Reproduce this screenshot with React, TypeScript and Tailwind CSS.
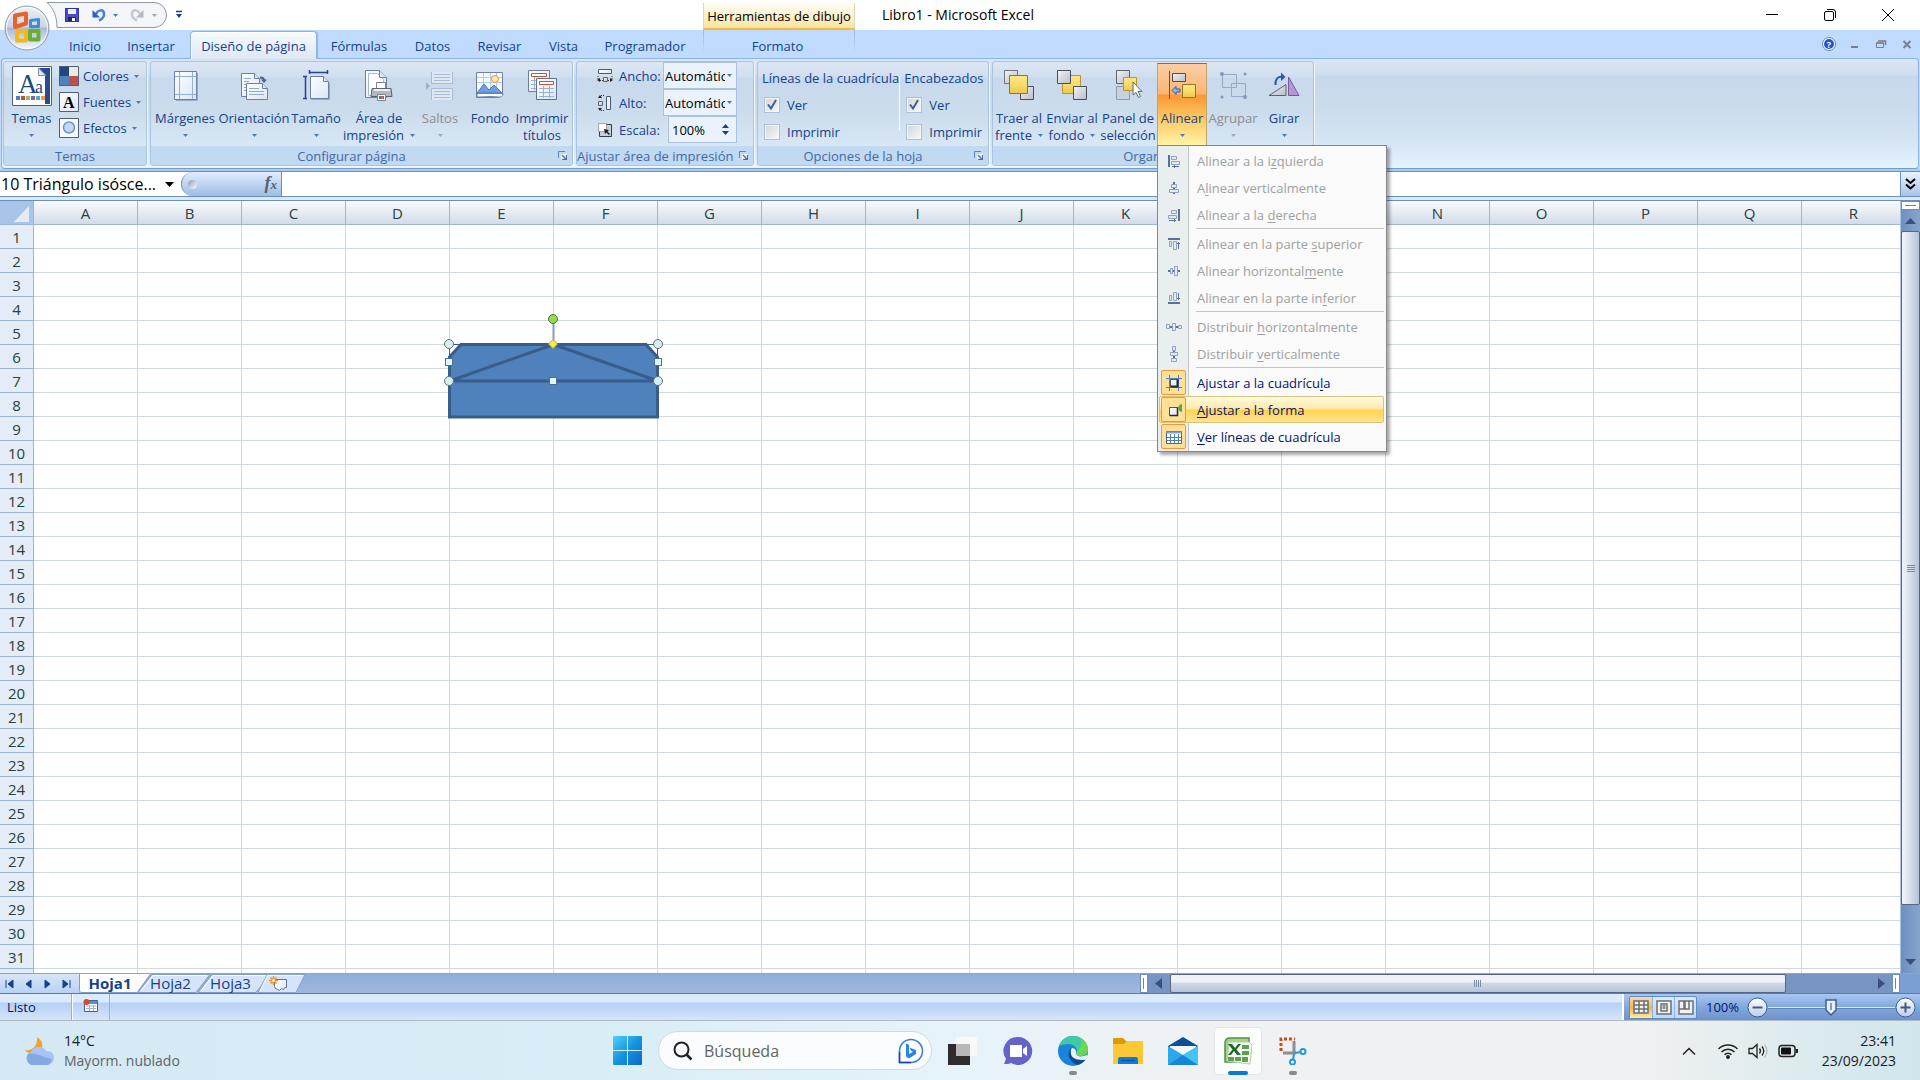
// Spreadsheet window with the page layout ribbon, plus the desktop taskbar.
// Drawings are small inline SVG components so no asset pipeline is needed.

import type { ReactNode } from "react";

const COLUMNS = "ABCDEFGHIJKLMNOPQR".split("");
const ROWS = Array.from({ length: 31 }, (_, i) => i + 1);

/* ---------- shared bits ---------- */

function Caret({ muted }: { muted?: boolean }) {
  return (
    <svg width="5" height="3" viewBox="0 0 5 3" className="inline-block shrink-0" aria-hidden="true">
      <path d="M0 0h5L2.5 3z" fill={muted ? "#a8a8a8" : "#4a7ab8"} />
    </svg>
  );
}

function Defs() {
  return (
    <svg width="0" height="0" className="absolute" aria-hidden="true">
      <defs>
        <linearGradient id="paper" x1="0" y1="0" x2="1" y2="1">
          <stop offset="0" stopColor="#fff" />
          <stop offset="1" stopColor="#dbe6f5" />
        </linearGradient>
        <linearGradient id="grey" x1="0" y1="0" x2="1" y2="1">
          <stop offset="0" stopColor="#f3f4f6" />
          <stop offset="1" stopColor="#b9bdc6" />
        </linearGradient>
        <linearGradient id="gold" x1="0" y1="0" x2="0" y2="1">
          <stop offset="0" stopColor="#fbe58a" />
          <stop offset="0.5" stopColor="#f8dc6c" />
          <stop offset="1" stopColor="#edc84c" />
        </linearGradient>
        <linearGradient id="orb" x1="0" y1="0" x2="0" y2="1">
          <stop offset="0" stopColor="#eef1f6" />
          <stop offset="0.48" stopColor="#cbd4e3" />
          <stop offset="0.5" stopColor="#a9b9d2" />
          <stop offset="1" stopColor="#f7fafe" />
        </linearGradient>
        <linearGradient id="knob" x1="0" y1="0" x2="0" y2="1">
          <stop offset="0" stopColor="#fff" />
          <stop offset="1" stopColor="#b9cdec" />
        </linearGradient>
        <linearGradient id="win" x1="0" y1="0" x2="1" y2="1">
          <stop offset="0" stopColor="#4fd2fb" />
          <stop offset="0.5" stopColor="#1595e0" />
          <stop offset="1" stopColor="#0669c8" />
        </linearGradient>
      </defs>
    </svg>
  );
}

/* ---------- ribbon icons (32px) ---------- */

function Svg32({ children }: { children: ReactNode }) {
  return (
    <svg width="32" height="32" viewBox="0 0 32 32" className="shrink-0" aria-hidden="true">
      {children}
    </svg>
  );
}

const MarginsIcon = (
  <Svg32>
    <path d="M5.500 2.500h22v28h-22z" fill="url(#paper)" stroke="#6d7fa3" />
    <path d="M28.500 4v27.500H7" fill="none" stroke="#9aa9c4" />
    <path d="M10.500 3v27M23.500 3v27M6 7.500h21M6 25.500h21" stroke="#8fb0d8" />
  </Svg32>
);

const OrientationIcon = (
  <Svg32>
    <path d="M3.500 4.500h13l5 5v18h-18z" fill="url(#paper)" stroke="#6d7fa3" />
    <path d="M16.500 4.500v5h5" fill="#dce6f4" stroke="#6d7fa3" />
    <path d="M6 9.500h7M6 12.500h5M6 15.500h3M6 18.500h2M6 21.500h2" stroke="#8fa9d2" />
    <path d="M8.500 14.500h16l5 5v11h-21z" fill="url(#paper)" stroke="#6d7fa3" />
    <path d="M24.500 14.500v5h5" fill="#dce6f4" stroke="#6d7fa3" />
    <path d="M11 19.500h10M11 22.500h15M11 25.500h15" stroke="#8fa9d2" />
    <path d="M22 8.500c3 0 4 1 4 3" fill="none" stroke="#4e6186" strokeWidth="2" />
    <path d="M23 10.500h6l-3 3.500z" fill="#4e6186" />
  </Svg32>
);

const SizeIcon = (
  <Svg32>
    <path d="M10.500 7.500h13l5 5v17h-18z" fill="url(#paper)" stroke="#6d7fa3" />
    <path d="M23.500 7.500v5h5" fill="#dce6f4" stroke="#6d7fa3" />
    <path d="M11 30.500h18.500V14" fill="none" stroke="#9aa9c4" />
    <path d="M9.500 3.500h18M9.500 1v4M27.500 1v4M5.500 7.500v22M3 7.500h4M3 29.500h4" stroke="#2f3f98" strokeWidth="1.500" fill="none" />
  </Svg32>
);

const PrintAreaIcon = (
  <Svg32>
    <path d="M2.500 1.500h14l7 7v20h-21z" fill="url(#paper)" stroke="#6d7fa3" />
    <path d="M5.500 4.500h9l6 6v16h-15z" fill="#fff" stroke="#aab8cf" />
    <path d="M16.500 1.500v7h7" fill="#dce6f4" stroke="#6d7fa3" />
    <path d="M13.500 13.500h9v7h-9z" fill="#fff" stroke="#7a8496" />
    <path d="M9 19.500h19l1 8H8z" fill="#b2b6be" stroke="#5c6370" />
    <path d="M11 21h16" stroke="#eceef1" strokeWidth="2" />
    <path d="M14.500 25.500h8v6h-8z" fill="#fff" stroke="#7a8496" />
    <path d="M16 27h5v3h-5z" fill="#3c78c8" />
    <path d="M18 27h2v3h-2z" fill="#e0682c" />
  </Svg32>
);

const BreaksIcon = (
  <Svg32>
    <path d="M7.500 3v11.500h21V3M7.500 31V19.500h21V31" fill="#dfe7f3" stroke="#a9bbd6" />
    <path d="M10 5.500h16M10 8.500h16M10 11.500h16M10 22.500h16M10 25.500h16M10 28.500h16" stroke="#a9bbd6" />
    <path d="M2 13l4 4-4 4z" fill="#9fb0cd" />
  </Svg32>
);

const BackgroundIcon = (
  <Svg32>
    <path d="M2.500 3.500h26v21l-4 4h-22z" fill="#f6f9fd" stroke="#6d7fa3" />
    <path d="M3 8.500h25M3 13.500h25M9.500 4v20M16.500 4v20M22.500 4v20" stroke="#b9c9e0" />
    <circle cx="21" cy="10" r="3.500" fill="#fce6c0" stroke="#e59a3c" />
    <path d="M3 24l7-9 5 6 5-5 8 8z" fill="#6f9fdf" stroke="#4a7cc4" />
    <path d="M3 24.500h26c0 3-2 4-5 3.500-6-1-14 0-21 0z" fill="#fff" stroke="#6d7fa3" />
  </Svg32>
);

const PrintTitlesIcon = (
  <Svg32>
    <path d="M2.500 1.500h21v21h-21z" fill="url(#paper)" stroke="#6d7fa3" />
    <path d="M5.500 4.500h15v3h-15z" fill="#fff" stroke="#c8502c" />
    <path d="M5 11.500h7M5 15.500h7M5 19.500h7M8.500 8v13" stroke="#9db1d1" />
    <path d="M10.500 9.500h20v21h-20z" fill="url(#paper)" stroke="#5f7093" />
    <path d="M13.500 12.500h14v3h-14z" fill="#fff" stroke="#c8502c" />
    <path d="M13 19.500h15M13 23.500h15M13 27.500h15M17.500 17v12M23.500 17v12" stroke="#9db1d1" />
  </Svg32>
);

const BringFrontIcon = (
  <Svg32>
    <path d="M1.500 1.500h13v13h-13z" fill="url(#grey)" stroke="#6f7480" />
    <path d="M17.500 17.500h13v13h-13z" fill="url(#grey)" stroke="#4a4e58" />
    <path d="M6.500 6.500h18v18h-18z" fill="url(#gold)" stroke="#8f7626" />
  </Svg32>
);

const SendBackIcon = (
  <Svg32>
    <path d="M6.500 6.500h18v18h-18z" fill="url(#gold)" stroke="#b9972c" />
    <path d="M1.500 1.500h13v13h-13z" fill="url(#grey)" stroke="#4a4e58" />
    <path d="M17.500 17.500h13v13h-13z" fill="url(#grey)" stroke="#4a4e58" />
  </Svg32>
);

const SelectionIcon = (
  <Svg32>
    <path d="M4.500 1.500h13v13h-13z" fill="url(#grey)" stroke="#5c616c" />
    <path d="M4.500 17.500h13v13h-13z" fill="#c9d1de" stroke="#8f9bb0" />
    <path d="M11.500 8.500h13v13h-13z" fill="url(#gold)" stroke="#b9972c" />
    <path d="M21 13v13l3-2.500 2.500 5 2-1-2.500-5h4z" fill="#fff" stroke="#5d6475" />
  </Svg32>
);

const AlignIcon = (
  <Svg32>
    <path d="M3.500 2v28" stroke="#2d5ba6" />
    <path d="M6.500 4.500h13v8h-13z" fill="url(#grey)" stroke="#4a4e58" />
    <path d="M16.500 15.500h13v13h-13z" fill="url(#gold)" stroke="#8f7626" />
    <path d="M6 21.500l4-4v2.500h4v3h-4v2.500z" fill="#8fb6ee" stroke="#2d5ba6" />
  </Svg32>
);

const GroupIcon = (
  <Svg32>
    <path d="M5.500 5.500h14v13h-14zM14.500 14.500h14v13h-14z" fill="none" stroke="#98a7c6" />
    <g fill="#8696ba">
      <circle cx="5" cy="5" r="2" />
      <circle cx="28" cy="5" r="1.500" />
      <circle cx="5" cy="28" r="1.500" />
      <circle cx="28" cy="28" r="2" />
    </g>
  </Svg32>
);

const RotateIcon = (
  <Svg32>
    <path d="M1 26.500h17v-11z" fill="url(#grey)" stroke="#5c616c" />
    <path d="M20.500 8v18.500H31z" fill="#b497d3" stroke="#7a57a5" />
    <path d="M7.500 16C7 10 10 7 15 8" fill="none" stroke="#2d5ba6" strokeWidth="2" />
    <path d="M13 3.500l4.500 4.500-4.500 4z" fill="#2d5ba6" />
  </Svg32>
);

const ThemesIcon = (
  <svg width="40" height="40" viewBox="0 0 40 40" className="shrink-0" aria-hidden="true">
    <path d="M.5.500h39v39H.500z" fill="#fff" stroke="#50607c" />
    <path d="M27 2h11v36h-5V10z" fill="#2b4a8c" />
    <path d="M26.500 2v7.500H34z" fill="#dfe7f4" stroke="#7a8cb0" />
    <text x="6" y="27" fontSize="27" fontFamily="Liberation Serif, serif" fill="#1f497d">A</text>
    <text x="23" y="27" fontSize="18" fontFamily="Liberation Serif, serif" fill="#1f497d">a</text>
    {["#4f81bd", "#c0504d", "#9bbb59", "#8064a2", "#4bacc6", "#f79646"].map((c, i) => (
      <rect key={c} x={4 + i * 5} y="30" width="4" height="4" fill={c} />
    ))}
  </svg>
);

/* ---------- small icons ---------- */

const ColorsIcon = (
  <svg width="20" height="20" viewBox="0 0 20 20" aria-hidden="true">
    <path d="M0 0h10v10H0z" fill="#1f497d" />
    <path d="M10 0h10v10H10z" fill="#eeece1" />
    <path d="M0 10h10v10H0z" fill="#4f81bd" />
    <path d="M10 10h10v10H10z" fill="#c0504d" />
    <path d="M.5.500h19v19H.500z" fill="none" stroke="#50607c" />
  </svg>
);

const FontsIcon = (
  <svg width="20" height="20" viewBox="0 0 20 20" aria-hidden="true">
    <path d="M.5.500h19v19H.500z" fill="url(#paper)" stroke="#50607c" />
    <text x="4" y="16" fontSize="16" fontWeight="bold" fontFamily="Liberation Serif, serif" fill="#000">A</text>
  </svg>
);

const EffectsIcon = (
  <svg width="20" height="20" viewBox="0 0 20 20" aria-hidden="true">
    <path d="M.5.500h19v19H.500z" fill="#f6f9fd" stroke="#50607c" />
    <circle cx="10" cy="9.500" r="5.500" fill="#c3d8f5" stroke="#6d95d0" strokeWidth="1.500" />
  </svg>
);

const WidthIcon = (
  <svg width="16" height="16" viewBox="0 0 16 16" aria-hidden="true">
    <path d="M1.500 1.500h13v4h-13z" fill="url(#paper)" stroke="#4c5b7a" />
    <path d="M1 8v4M15 8v4" stroke="#333" strokeDasharray="1 1" />
    <path d="M3 10v4l-3-2zM13 10v4l3-2z" fill="#222" />
    <path d="M6.500 9.500h4v4h-4z" fill="url(#grey)" stroke="#667" />
    <path d="M3 12.500h3M11 12.500h3" stroke="#333" strokeDasharray="1 1" />
  </svg>
);

const HeightIcon = (
  <svg width="16" height="16" viewBox="0 0 16 16" aria-hidden="true">
    <path d="M9.500 1.500h4v13h-4z" fill="url(#paper)" stroke="#4c5b7a" />
    <path d="M1 3h4l-2-3zM1 13h4l-2 3z" fill="#222" />
    <path d="M4 .5h4M4 15.500h4" stroke="#333" strokeDasharray="1 1" />
    <path d="M1.500 6.500h4v4h-4z" fill="url(#grey)" stroke="#667" />
  </svg>
);

const ScaleIcon = (
  <svg width="16" height="16" viewBox="0 0 16 16" aria-hidden="true">
    <path d="M2.500 2.500h12v12h-12z" fill="#c9d0dc" stroke="#333c50" />
    <path d="M1.500 1.500h8v8h-8z" fill="#fff" stroke="#667" strokeDasharray="1 1" />
    <path d="M7 7l1 5 1.500-1.500L12 13l1-1-2.500-2.500L12 8z" fill="#222" />
  </svg>
);

const LauncherIcon = (
  <svg width="9" height="9" viewBox="0 0 9 9" aria-hidden="true">
    <path d="M.5 7V.500H7" fill="none" stroke="#5f84b6" />
    <path d="M3 3h5.500v5.500H3z" fill="#fff" />
    <path d="M4 4l4 4M8.500 4v4.500H4" fill="none" stroke="#4c6f9f" strokeWidth="1.500" />
  </svg>
);

/* ---------- ribbon ---------- */

function Group({ title, launcher, className, children }: { title: string; launcher?: boolean; className: string; children: ReactNode }) {
  return (
    <section
      className={`flex h-[105px] shrink-0 flex-col rounded-[3px] border border-[#a9c4e0] bg-[linear-gradient(#dce7f5_0,#d0deee_15px,#c8d9ed_16px,#cbdcec_50px,#d8e7f5_84px)] shadow-[1px_1px_0_#f0f7fe] ${className}`}
    >
      <div className="flex h-[84px]">{children}</div>
      <div className="flex h-[19px] items-center rounded-b-[2px] bg-[#c1d9f1] text-[#3e6aaa]">
        <h2 className="flex-1 text-center whitespace-nowrap">{title}</h2>
        {launcher ? (
          <button type="button" aria-label={`Opciones de ${title}`} className="flex h-4 w-5 shrink-0 items-center justify-center">
            {LauncherIcon}
          </button>
        ) : null}
      </div>
    </section>
  );
}

function BigButton({
  icon,
  lines,
  className,
  caret = true,
  muted,
  active,
}: {
  icon: ReactNode;
  lines: string[];
  className: string;
  caret?: boolean;
  muted?: boolean;
  active?: boolean;
}) {
  const state = active
    ? "border border-[#c2a26a] border-t-[#8e6b43] border-b-[#f5c33c] bg-[linear-gradient(#fbcfa4_0,#fbb574_30px,#fb9734_31px,#fdc45c_52px,#fff5a8_82px)]"
    : "border border-transparent";
  return (
    <button
      type="button"
      disabled={muted}
      className={`mt-px flex h-[83px] shrink-0 flex-col items-center pt-[5px] leading-[17px] whitespace-nowrap ${muted ? "text-[#8d8d8d]" : "text-[#15428b]"} ${state} ${className}`}
    >
      {icon}
      <span className="mt-[9px]">{lines[0]}</span>
      {lines[1] ? (
        <span className="flex items-center gap-[6px]">
          {lines[1]}
          {caret ? <Caret muted={muted} /> : null}
        </span>
      ) : (
        <span className="flex h-[17px] items-center">
          <Caret muted={muted} />
        </span>
      )}
    </button>
  );
}

function SmallButton({ icon, label }: { icon: ReactNode; label: string }) {
  return (
    <button type="button" className="flex h-[26px] items-center gap-1 text-[#15428b]">
      {icon}
      <span>{label}</span>
      <span className="ml-px flex">
        <Caret />
      </span>
    </button>
  );
}

function ScaleRow({ id, icon, label, children }: { id: string; icon: ReactNode; label: string; children: ReactNode }) {
  return (
    <div className="flex h-[27px] items-center">
      {icon}
      <label htmlFor={id} className="ml-[6px] flex-1 text-[#15428b]">
        {label}
      </label>
      {children}
    </div>
  );
}

function AutoSelect({ id }: { id: string }) {
  return (
    <div className="relative h-[27px] w-[74px] border border-[#abc1de] bg-[#eaf2fb]">
      <select id={id} className="h-full w-[61px] appearance-none overflow-hidden bg-transparent pl-px text-black">
        <option>Automático</option>
      </select>
      <span className="pointer-events-none absolute top-[11px] right-1 flex">
        <Caret />
      </span>
    </div>
  );
}

function Check({ id, label, checked }: { id: string; label: string; checked?: boolean }) {
  return (
    <div className="flex h-[27px] items-center gap-[7px]">
      <span className="relative flex">
        <input
          id={id}
          type="checkbox"
          defaultChecked={checked}
          className="peer h-4 w-4 appearance-none border border-[#abc1de] bg-linear-to-br from-[#d3d6da] to-[#f8f8f8] shadow-[inset_0_0_0_1px_#f4f4f4]"
        />
        <svg viewBox="0 0 16 16" className="pointer-events-none absolute inset-0 hidden h-4 w-4 peer-checked:block" aria-hidden="true">
          <path d="M4 7.500l3 4 5-8.500" fill="none" stroke="#3d5f91" strokeWidth="2" />
        </svg>
      </span>
      <label htmlFor={id} className="text-[#15428b]">
        {label}
      </label>
    </div>
  );
}

function Ribbon() {
  return (
    <div className="bg-[#bfdbff]">
      <div className="mr-px ml-px flex h-[111px] gap-[3px] rounded-[4px] border border-[#8db2e3] border-b-[#6f9fc4] bg-[linear-gradient(#dbe6f4_0,#cfdded_16px,#c7d8ed_17px,#cbdcec_50px,#d6e6f5_86px,#e3f4ff_108px)] pt-[2px] pl-px">
        <Group title="Temas" className="w-[144px]">
          <BigButton icon={<span className="-mt-[3px] flex">{ThemesIcon}</span>} lines={["Temas"]} className="ml-1 w-[47px] [&>span:nth-child(2)]:mt-1" />
          <div className="ml-1 flex flex-col pt-px">
            <SmallButton icon={ColorsIcon} label="Colores" />
            <SmallButton icon={FontsIcon} label="Fuentes" />
            <SmallButton icon={EffectsIcon} label="Efectos" />
          </div>
        </Group>

        <Group title="Configurar página" launcher className="w-[423px]">
          <BigButton icon={MarginsIcon} lines={["Márgenes"]} className="w-[68px]" />
          <BigButton icon={OrientationIcon} lines={["Orientación"]} className="w-[70px]" />
          <BigButton icon={SizeIcon} lines={["Tamaño"]} className="w-[54px]" />
          <BigButton icon={PrintAreaIcon} lines={["Área de", "impresión"]} className="w-[72px]" />
          <BigButton icon={BreaksIcon} lines={["Saltos"]} muted className="w-[50px]" />
          <BigButton icon={BackgroundIcon} lines={["Fondo", " "]} caret={false} className="w-[50px]" />
          <BigButton icon={PrintTitlesIcon} lines={["Imprimir", "títulos"]} caret={false} className="w-[54px]" />
        </Group>

        <Group title="Ajustar área de impresión" launcher className="w-[178px]">
          <div className="ml-5 flex w-[140px] flex-col">
            <ScaleRow id="ancho" icon={WidthIcon} label="Ancho:">
              <AutoSelect id="ancho" />
            </ScaleRow>
            <ScaleRow id="alto" icon={HeightIcon} label="Alto:">
              <AutoSelect id="alto" />
            </ScaleRow>
            <ScaleRow id="escala" icon={ScaleIcon} label="Escala:">
              <div className="flex h-[27px] w-[69px] items-center border border-[#abc1de] bg-[#eaf2fb]">
                <input id="escala" type="text" defaultValue="100%" className="w-[53px] bg-transparent pl-[3px] text-black" />
                <span className="flex flex-col gap-[3px]">
                  <button type="button" aria-label="Aumentar escala" className="flex">
                    <svg width="7" height="4" aria-hidden="true"><path d="M0 4h7L3.500 0z" fill="#15428b" /></svg>
                  </button>
                  <button type="button" aria-label="Reducir escala" className="flex">
                    <svg width="7" height="4" aria-hidden="true"><path d="M0 0h7L3.500 4z" fill="#15428b" /></svg>
                  </button>
                </span>
              </div>
            </ScaleRow>
          </div>
        </Group>

        <Group title="Opciones de la hoja" launcher className="w-[232px]">
          <fieldset className="ml-1 w-[137px]">
            <legend className="h-[29px] pt-2 whitespace-nowrap text-[#15428b]">Líneas de la cuadrícula</legend>
            <div className="pl-[2px]">
              <Check id="cuadricula-ver" label="Ver" checked />
              <Check id="cuadricula-imprimir" label="Imprimir" />
            </div>
          </fieldset>
          <div className="mt-[14px] h-[54px] w-px bg-white" />
          <fieldset className="pl-1">
            <legend className="h-[29px] pt-2 whitespace-nowrap text-[#15428b]">Encabezados</legend>
            <div className="pl-[2px]">
              <Check id="encabezados-ver" label="Ver" checked />
              <Check id="encabezados-imprimir" label="Imprimir" />
            </div>
          </fieldset>
        </Group>

        <Group title="Organizar" className="w-[322px]">
          <BigButton icon={BringFrontIcon} lines={["Traer al", "frente"]} className="w-[52px]" />
          <BigButton icon={SendBackIcon} lines={["Enviar al", "fondo"]} className="w-[54px]" />
          <BigButton icon={SelectionIcon} lines={["Panel de", "selección"]} caret={false} className="w-[58px]" />
          <div className="relative">
            <BigButton icon={AlignIcon} lines={["Alinear"]} active className="w-[50px]" />
            <AlignMenu />
          </div>
          <BigButton icon={GroupIcon} lines={["Agrupar"]} muted className="w-[52px]" />
          <BigButton icon={RotateIcon} lines={["Girar"]} className="w-[50px]" />
        </Group>
      </div>
      <div className="h-[2px] bg-[#b0cbef]" />
    </div>
  );
}

/* ---------- align menu ---------- */

// Outlined bars plus a solid guide line, in a 16px box.
function GuideIcon({ bars, guide, arrow }: { bars: string; guide: string; arrow?: string }) {
  return (
    <svg width="16" height="16" viewBox="0 0 16 16" aria-hidden="true">
      <path d={guide} stroke="#5a6f9c" strokeWidth="2" fill="none" />
      <path d={bars} stroke="#8fa2c4" fill="#e4eaf4" />
      {arrow ? <path d={arrow} stroke="#5a6f9c" fill="none" /> : null}
    </svg>
  );
}

const SnapGridIcon = (
  <svg width="16" height="16" viewBox="0 0 16 16" aria-hidden="true">
    <path d="M3.500 0v16M12.500 0v16M0 3.500h16M0 12.500h16" stroke="#4a7fd0" />
    <path d="M4.500 4.500h7v7h-7z" fill="url(#paper)" stroke="#4b556b" />
    <path d="M11.500 4.500v7h-7" stroke="#20283a" strokeWidth="2" fill="none" />
  </svg>
);

const SnapShapeIcon = (
  <svg width="16" height="16" viewBox="0 0 16 16" aria-hidden="true">
    <path d="M3.500 5.500h8v8h-8z" fill="url(#paper)" stroke="#4b556b" />
    <path d="M11.500 5.500v8h-8" stroke="#20283a" strokeWidth="1.500" fill="none" />
    <path d="M16 2c-5 1-5 7 0 8z" fill="#5aa545" />
  </svg>
);

const GridLinesIcon = (
  <svg width="16" height="16" viewBox="0 0 16 16" aria-hidden="true">
    <path d="M.5 2.500h15v12H.500z" fill="#fff" stroke="#4a6592" />
    <path d="M.5 2.500h15v2H.500z" fill="#7fa3d8" />
    <path d="M4.500 5v9M8.500 5v9M12.500 5v9M1 8.500h14M1 11.500h14" stroke="#4f7cc0" />
  </svg>
);

type MenuEntry = { pre: string; key: string; post: string; icon: ReactNode; on?: boolean; hot?: boolean };

const MENU: MenuEntry[][] = [
  [
    { pre: "Alinear a la i", key: "z", post: "quierda", icon: <GuideIcon guide="M3 2v12" bars="M5.500 3.500h5v3h-5zM5.500 8.500h8v3h-8z" arrow="M6 13.500h7M8.500 12v3" /> },
    { pre: "A", key: "l", post: "inear verticalmente", icon: <GuideIcon guide="M8 2v12" bars="M5.500 4.500h5v3h-5zM3.500 9.500h9v3h-9z" /> },
    { pre: "Alinear a la ", key: "d", post: "erecha", icon: <GuideIcon guide="M13 2v12" bars="M5.500 3.500h5v3h-5zM2.500 8.500h8v3h-8z" arrow="M3 13.500h7M8.500 12v3" /> },
  ],
  [
    { pre: "Alinear en la parte ", key: "s", post: "uperior", icon: <GuideIcon guide="M2 3h12" bars="M3.500 5.500h2v5h-2zM7.500 5.500h3v8h-3z" arrow="M12.500 6v7M11 7.500h3" /> },
    { pre: "Alinear horizontal", key: "m", post: "ente", icon: <GuideIcon guide="M2 8h12" bars="M4.500 5.500h2v5h-2zM8.500 3.500h3v9h-3z" /> },
    { pre: "Alinear en la parte in", key: "f", post: "erior", icon: <GuideIcon guide="M2 13h12" bars="M3.500 5.500h2v5h-2zM7.500 2.500h3v8h-3z" arrow="M12.500 3v7M11 8.500h3" /> },
  ],
  [
    { pre: "Distribuir ", key: "h", post: "orizontalmente", icon: <GuideIcon guide="M3 8h10" bars="M.5 5.500h3v4h-3zM6.500 4.500h3v7h-3zM12.500 6.500h3v3h-3z" /> },
    { pre: "Distribuir ", key: "v", post: "erticalmente", icon: <GuideIcon guide="M8 3v10" bars="M6.500.500h3v4h-3zM4.500 6.500h7v3h-7zM5.500 12.500h5v3h-5z" /> },
  ],
  [
    { pre: "Ajustar a la cuadrícu", key: "l", post: "a", icon: SnapGridIcon, on: true },
    { pre: "", key: "A", post: "justar a la forma", icon: SnapShapeIcon, on: true, hot: true },
    { pre: "", key: "V", post: "er líneas de cuadrícula", icon: GridLinesIcon, on: true },
  ],
];

function MenuRow({ item }: { item: MenuEntry }) {
  return (
    <button
      type="button"
      role="menuitem"
      disabled={!item.on}
      className={`flex h-[27px] w-full items-center gap-[11px] rounded-[2px] border px-px ${item.on ? "text-[#00156e]" : "text-[#a0a0a0]"} ${
        item.hot ? "border-[#d9c37c] bg-[linear-gradient(#fffae0_0,#ffe9a6_12px,#ffd252_13px,#ffe58f_25px)]" : "border-transparent"
      }`}
    >
      <span
        className={`flex h-[25px] w-[25px] shrink-0 items-center justify-center rounded-[2px] border ${item.on ? "border-[#f29536] bg-[#ffe094]" : "border-transparent"}`}
      >
        {item.icon}
      </span>
      <span className="whitespace-nowrap">
        {item.pre}
        <u className="underline-offset-2">{item.key}</u>
        {item.post}
      </span>
    </button>
  );
}

function AlignMenu() {
  return (
    <div
      role="menu"
      className="absolute top-[83px] left-0 z-20 w-[230px] border border-[#868686] bg-[linear-gradient(to_right,#e9eeee_30px,#c5c5c5_30px,#c5c5c5_31px,#fafafa_31px)] py-px pr-[2px] pl-px shadow-[3px_3px_3px_#00000055]"
    >
      {MENU.map((section, i) => (
        <div key={section[0].post} className="relative">
          {i > 0 ? <hr className="ml-[37px] h-[2px] border-0 border-t border-[#c5c5c5]" /> : null}
          {section.map((item) => (
            <MenuRow key={item.pre + item.post} item={item} />
          ))}
        </div>
      ))}
    </div>
  );
}

/* ---------- title bar and tabs ---------- */

function OfficeButton() {
  return (
    <button type="button" aria-label="Botón de Office" className="absolute top-[5px] left-1 z-10 flex">
      <svg width="46" height="47" viewBox="0 0 46 47" aria-hidden="true">
        <circle cx="23" cy="23" r="22" fill="url(#orb)" stroke="#8e9ab0" />
        <circle cx="23" cy="23" r="20.500" fill="none" stroke="#fff" strokeOpacity="0.800" />
        <g fill="none" strokeWidth="4" strokeLinejoin="round">
          <path d="M11 10.500l11-2v10l-11 3.500z" stroke="#e8622c" />
          <path d="M26.500 15.500l8-1v7h-8z" stroke="#3d8fd1" strokeWidth="3" />
          <path d="M13 26.500h9v9l-9 0z" stroke="#f2b820" />
          <path d="M26 26h8.500v8.500H26z" stroke="#6aac35" />
        </g>
      </svg>
    </button>
  );
}

function TitleBar() {
  return (
    <header className="flex h-[30px] shrink-0 items-stretch bg-white">
      <div className="flex w-[703px] items-start pt-[2px] pl-[46px]">
        <div className="relative flex h-[26px] w-[121px] items-center pl-[18px]">
          <svg width="121" height="26" viewBox="0 0 121 26" className="absolute inset-0" aria-hidden="true">
            <path d="M1 .5h107a12.500 12.500 0 010 25H11c0-10-3-19-10-25z" fill="#f3f5f8" stroke="#8f98a8" />
          </svg>
          <button type="button" aria-label="Guardar" className="relative flex">
            <svg width="16" height="16" viewBox="0 0 16 16" aria-hidden="true">
              <path d="M1 1h14v14H1z" fill="#4a4fc0" />
              <path d="M4 1h8v6H4z" fill="#e8effb" />
              <path d="M4 10h8v5H4z" fill="#23265e" />
              <path d="M8 11h3v3H8z" fill="#fff" />
              <path d="M1.500 1.500h13v13h-13z" fill="none" stroke="#33389a" />
            </svg>
          </button>
          <button type="button" aria-label="Deshacer" className="relative ml-3 flex">
            <svg width="14" height="14" viewBox="0 0 14 14" aria-hidden="true">
              <path d="M4 6c2-4.500 7.500-5 8-.5.300 3-1.500 5.500-5 7" fill="none" stroke="#4a7fd6" strokeWidth="2.500" />
              <path d="M.500 2v7.500H8z" fill="#2f5fc0" />
            </svg>
          </button>
          <span className="relative ml-[7px] flex"><Caret /></span>
          <button type="button" aria-label="Rehacer" disabled className="relative ml-3 flex">
            <svg width="14" height="14" viewBox="0 0 14 14" aria-hidden="true">
              <path d="M10 6C8 1.500 2.500 1 2 5.500c-.3 3 1.500 5.500 5 7" fill="none" stroke="#c0c9d6" strokeWidth="2.500" />
              <path d="M13.500 2v7.500H6z" fill="#aeb9c9" />
            </svg>
          </button>
          <span className="relative ml-2 flex"><Caret muted /></span>
        </div>
        <button type="button" aria-label="Personalizar barra de acceso rápido" className="mt-2 ml-[8px] flex">
          <svg width="8" height="9" viewBox="0 0 8 9" aria-hidden="true">
            <path d="M1 1.500h6" stroke="#15428b" strokeWidth="1.500" />
            <path d="M1 4h6L4 8z" fill="#15428b" />
          </svg>
        </button>
      </div>
      <div className="mt-[3px] flex w-[152px] items-center justify-center border-x border-b-2 border-x-[#dfd6c0] border-b-[#f5b73c] bg-linear-to-b from-[#fffdf8] to-[#fbe4a0] text-black">
        Herramientas de dibujo
      </div>
      <h1 className="ml-[27px] flex-1 self-center text-sm whitespace-nowrap text-black">Libro1 - Microsoft Excel</h1>
      <div className="flex pr-[3px]">
        <button type="button" aria-label="Minimizar" className="flex w-[58px] items-center justify-center">
          <svg width="12" height="12" aria-hidden="true"><path d="M0 5.500h12" stroke="#000" /></svg>
        </button>
        <button type="button" aria-label="Restaurar" className="flex w-[58px] items-center justify-center">
          <svg width="12" height="12" viewBox="0 0 12 12" fill="none" stroke="#000" aria-hidden="true">
            <rect x=".5" y="2.500" width="9" height="9" rx="1.500" />
            <path d="M3 .500h6a2.500 2.500 0 012.500 2.500v6" />
          </svg>
        </button>
        <button type="button" aria-label="Cerrar" className="flex w-[58px] items-center justify-center">
          <svg width="12" height="12" aria-hidden="true"><path d="M0 0l12 12M12 0L0 12" stroke="#000" /></svg>
        </button>
      </div>
    </header>
  );
}

const TABS = [
  { label: "Inicio", className: "w-[72px]" },
  { label: "Insertar", className: "w-[60px] mr-[9px]" },
  { label: "Diseño de página", className: "w-[127px]" },
  { label: "Fórmulas", className: "w-[84px]" },
  { label: "Datos", className: "w-[63px]" },
  { label: "Revisar", className: "w-[71px]" },
  { label: "Vista", className: "w-[57px]" },
  { label: "Programador", className: "w-[106px]" },
];

function TabBar() {
  return (
    <nav className="flex h-7 shrink-0 items-stretch bg-[#bfdbff] pl-[49px] text-[#15428b]" role="tablist">
      {TABS.map((t) => {
        const active = t.label === "Diseño de página";
        return (
          <button
            key={t.label}
            type="button"
            role="tab"
            aria-selected={active}
            className={`shrink-0 whitespace-nowrap ${t.className} ${
              active ? "z-10 mt-px -mb-px rounded-t-[4px] border border-b-0 border-[#8db2e3] bg-linear-to-b from-[#f7fafe] to-[#dde8f5] shadow-[inset_1px_1px_0_#fff,1px_0_1px_#8fb6e8]" : "pt-1"
            }`}
          >
            {t.label}
          </button>
        );
      })}
      <button
        type="button"
        role="tab"
        aria-selected={false}
        className="ml-[5px] w-[152px] bg-[linear-gradient(#9fb9de,#bfdbff),linear-gradient(#9fb9de,#bfdbff)] bg-[length:1px_24px] bg-[position:left_top,right_top] bg-no-repeat pt-1 pr-[3px]"
      >
        Formato
      </button>
      <div className="flex flex-1 items-center justify-end gap-3 pr-[6px]">
        <button type="button" aria-label="Ayuda">
          <svg width="14" height="14" viewBox="0 0 14 14" aria-hidden="true">
            <circle cx="7" cy="7" r="6.500" fill="#fff" stroke="#5a86c8" />
            <circle cx="7" cy="7" r="5" fill="#2458c8" />
            <text x="7" y="10.500" fontSize="9" fontWeight="bold" textAnchor="middle" fill="#fff">?</text>
          </svg>
        </button>
        <button type="button" aria-label="Minimizar libro">
          <svg width="14" height="14" aria-hidden="true"><path d="M3 9h7v2H3z" fill="#7a7f88" /></svg>
        </button>
        <button type="button" aria-label="Restaurar libro">
          <svg width="14" height="14" viewBox="0 0 14 14" fill="none" stroke="#7a7f88" aria-hidden="true">
            <path d="M4 4h7.500v4" strokeWidth="1.500" />
            <path d="M2.500 6h7v4.500h-7z" />
            <path d="M2 6h8" strokeWidth="1.500" />
          </svg>
        </button>
        <button type="button" aria-label="Cerrar libro">
          <svg width="14" height="14" viewBox="0 0 14 14" aria-hidden="true"><path d="M3.500 4l7 7M10.500 4l-7 7" stroke="#7a7f88" strokeWidth="2" /></svg>
        </button>
      </div>
    </nav>
  );
}

/* ---------- formula bar ---------- */

function FormulaBar() {
  return (
    <div className="bg-[#dce8f8] pb-[3px]">
      <div className="flex h-[26px] items-stretch border-y border-[#6b8fbc] bg-white">
        <input
          aria-label="Cuadro de nombres"
          defaultValue="10 Triángulo isósce..."
          className="w-[161px] pl-px text-base text-black outline-none"
        />
        <button type="button" aria-label="Lista de nombres" className="flex w-5 items-center pl-1">
          <svg width="9" height="5" aria-hidden="true"><path d="M0 0h9L4.500 5z" fill="#000" /></svg>
        </button>
        <div className="flex w-[101px] items-center justify-between rounded-l-full border-r border-l border-[#6b8fbc] bg-linear-to-b from-[#e3edfb] to-[#9dbce6] pr-1 pl-[6px]">
          <span className="h-[9px] w-[9px] rounded-full bg-linear-to-br from-[#8f9cb0] to-white" />
          <button type="button" aria-label="Insertar función" className="flex font-['Liberation_Serif',serif] leading-5 font-bold text-[#53606f] italic">
            <span className="text-lg leading-5">f</span>
            <span className="pt-[2px] text-[13px] leading-5">x</span>
          </button>
        </div>
        <input aria-label="Barra de fórmulas" className="min-w-0 flex-1 px-1 text-base outline-none" />
        <button
          type="button"
          aria-label="Expandir barra de fórmulas"
          className="flex w-5 items-center justify-center border-l border-[#6b8fbc] bg-linear-to-b from-[#eaf2fd] to-[#a9c4e8]"
        >
          <svg width="11" height="12" viewBox="0 0 11 12" fill="none" stroke="#000" strokeWidth="2" aria-hidden="true">
            <path d="M1 1l4.500 4L10 1M1 6.500l4.500 4 4.500-4" />
          </svg>
        </button>
      </div>
    </div>
  );
}

/* ---------- worksheet ---------- */

function Shape() {
  const circles = [[9, 32], [218, 32], [9, 69], [218, 69]];
  const squares = [[9, 50], [218, 50], [113, 69]];
  return (
    <svg width="228" height="116" viewBox="0 0 228 116" className="absolute top-[110px] left-[440px]" aria-hidden="true">
      <path d="M9.500 46L21 33.500h185L217.500 46v60H9.500z" fill="#4f81bd" stroke="#385d8a" strokeWidth="3" />
      <path d="M9.500 70l104-36.500L218 70z" fill="#4f81bd" stroke="#385d8a" strokeWidth="3" strokeLinejoin="bevel" />
      <path d="M9.500 33.500h208v37H9.500z" fill="none" stroke="#385d8a" />
      <path d="M113.500 12v18" stroke="#7f9cc4" strokeWidth="2" />
      {circles.map(([x, y]) => (
        <circle key={`${x}-${y}`} cx={x} cy={y + 1} r="4.500" fill="#d5eef2" stroke="#666e78" />
      ))}
      {squares.map(([x, y]) => (
        <rect key={`${x}-${y}`} x={x - 3.5} y={y - 2.5} width="7" height="7" fill="#e2f7fb" stroke="#4c7093" />
      ))}
      <circle cx="113" cy="8" r="4.500" fill="#8ee13c" stroke="#5a6a55" />
      <path d="M113 28.500l4.500 4.500-4.500 4.500-4.500-4.500z" fill="#fbee3a" stroke="#b9a53c" />
    </svg>
  );
}

function Worksheet() {
  return (
    <main className="relative min-w-0 flex-1 overflow-hidden bg-white">
      <table className="w-[1906px] table-fixed border-separate border-spacing-0 text-center text-[15px] leading-none text-[#27413e]">
        <thead>
          <tr className="h-6">
            <th aria-label="Seleccionar todo" className="h-6 w-[34px] border-r border-b border-[#9eb6ce] bg-[#a9c4e9] p-0">
              <svg width="33" height="23" aria-hidden="true"><path d="M29 5v16H14z" fill="#e6ecf5" /></svg>
            </th>
            {COLUMNS.map((c) => (
              <th key={c} scope="col" className="h-6 border-r border-b border-[#9eb6ce] bg-linear-to-b from-[#f9fcfd] to-[#d3dbe9] p-0 pt-px font-normal">
                {c}
              </th>
            ))}
          </tr>
        </thead>
        <tbody>
          {ROWS.map((r) => (
            <tr key={r}>
              <th scope="row" className="h-6 border-r border-b border-[#9eb6ce] bg-[#e4ecf7] p-0 pt-px font-normal">{r}</th>
              {COLUMNS.map((c) => (
                <td key={c} className="h-6 border-r border-b border-[#d0d7e5] p-0" />
              ))}
            </tr>
          ))}
          <tr>
            <th className="h-6 border-r border-[#9eb6ce] bg-[#e4ecf7] p-0" />
            {COLUMNS.map((c) => (
              <td key={c} className="h-6 border-r border-[#d0d7e5] p-0" />
            ))}
          </tr>
        </tbody>
      </table>
      <Shape />
    </main>
  );
}

function VerticalScroll() {
  return (
    <div className="flex w-5 shrink-0 flex-col items-stretch border-l border-[#a9c4e9] bg-linear-to-r from-[#6f8fbe] to-[#86a5cd]">
      <div className="flex h-[9px] items-center border border-[#6b8fbc] bg-white px-[3px]">
        <span className="h-px w-full bg-[#5f84b6]" />
      </div>
      <button type="button" aria-label="Desplazar arriba" className="flex h-[21px] items-center justify-center">
        <svg width="11" height="6" aria-hidden="true"><path d="M0 6h11L5.500 0z" fill="#3b4f7c" /></svg>
      </button>
      <div className="flex flex-[674] flex-col items-center justify-center gap-px rounded-[2px] border border-[#54668c] bg-linear-to-r from-[#f4f6fa] via-[#d5deea] to-[#b3c3d8]">
        {[0, 1, 2, 3].map((i) => (
          <span key={i} className="h-px w-2 bg-[#7d8da6]" />
        ))}
      </div>
      <div className="flex-[46]" />
      <button type="button" aria-label="Desplazar abajo" className="flex h-[22px] items-center justify-center">
        <svg width="11" height="6" aria-hidden="true"><path d="M0 0h11L5.500 6z" fill="#3b4f7c" /></svg>
      </button>
    </div>
  );
}

/* ---------- sheet tabs ---------- */

const NAV = [
  { label: "Primera hoja", d: "M2 1v8M9 1L4 5l5 4z" },
  { label: "Hoja anterior", d: "M8 1L3 5l5 4z" },
  { label: "Hoja siguiente", d: "M3 1l5 4-5 4z" },
  { label: "Última hoja", d: "M9 1v8M2 1l5 4-5 4z" },
];

function SlantTab({ children, className, label }: { children: ReactNode; className: string; label?: string }) {
  return (
    <button type="button" aria-label={label} className={`relative flex h-[19px] items-center justify-center pr-[7px] ${className}`}>
      <svg viewBox="0 0 72 19" preserveAspectRatio="none" className="absolute inset-0 h-full w-full" aria-hidden="true">
        <path d="M0 18.500L14 .5h58L58 18.500z" fill="#d5e4f8" stroke="#7d9cc9" />
        <path d="M3 17L15 1.500h54" fill="none" stroke="#fff" />
      </svg>
      <span className="relative flex">{children}</span>
    </button>
  );
}

function SheetBar() {
  return (
    <div className="flex h-5 shrink-0 items-stretch border-t border-[#8aa6cf] bg-linear-to-b from-[#8fadd9] to-[#9fb8de] text-[15px] leading-none text-[#15428b]">
      <div className="flex w-[79px] items-center bg-linear-to-b from-[#d6e5fa] to-[#b9d2f3]">
        {NAV.map((n) => (
          <button key={n.label} type="button" aria-label={n.label} className="flex w-[19px] justify-center">
            <svg width="11" height="10" viewBox="0 0 11 10" aria-hidden="true"><path d={n.d} fill="#15428b" stroke="#15428b" /></svg>
          </button>
        ))}
      </div>
      <button type="button" className="relative flex h-[19px] w-[71px] items-center justify-center pr-[9px] font-bold">
        <svg viewBox="0 0 72 19" preserveAspectRatio="none" className="absolute inset-0 h-full w-full" aria-hidden="true">
          <path d="M0 0h72L59 18.500H2q-2 0-2-2z" fill="#fff" />
          <path d="M.5 0v16.500q0 2 2 2H59L72 1" fill="none" stroke="#7d9cc9" />
        </svg>
        <span className="relative">Hoja1</span>
      </button>
      <SlantTab className="-ml-[12px] w-[72px]">Hoja2</SlantTab>
      <SlantTab className="-ml-[12px] w-[72px]">Hoja3</SlantTab>
      <SlantTab className="-ml-[12px] w-[47px]" label="Insertar hoja de cálculo">
        <svg width="18" height="16" viewBox="0 0 18 16" aria-hidden="true">
          <path d="M5.500 3.500h12v8q-2-1-3 2l-2-1-2 2-2-1q-3-1-3-3z" fill="url(#paper)" stroke="#5f7093" />
          <path d="M4.500 0v9M0 4.500h9M1.500 1.500l6 6M7.500 1.500l-6 6" stroke="#e9962c" strokeWidth="1.500" />
          <circle cx="4.500" cy="4.500" r="1.500" fill="#fff6c0" />
        </svg>
      </SlantTab>
      <div className="flex-[841]" />
      <div className="flex w-2 items-center justify-center border border-[#6b8fbc] bg-white">
        <span className="h-[11px] w-px bg-[#5f84b6]" />
      </div>
      <div className="flex flex-[750] bg-[#7795c0]">
        <button type="button" aria-label="Desplazar a la izquierda" className="flex w-[22px] items-center justify-center">
          <svg width="7" height="11" aria-hidden="true"><path d="M7 0v11L0 5.500z" fill="#3b4f7c" /></svg>
        </button>
        <div className="flex flex-[617] items-center justify-center gap-px rounded-[2px] border border-[#54668c] bg-linear-to-b from-[#f0f2f7] from-40% via-[#cfd9e6] via-50% to-[#b5c4d8]">
          {[0, 1, 2, 3].map((i) => (
            <span key={i} className="h-[7px] w-px bg-[#7d8da6]" />
          ))}
        </div>
        <div className="flex-[84]" />
        <button type="button" aria-label="Desplazar a la derecha" className="flex w-[22px] items-center justify-center">
          <svg width="7" height="11" aria-hidden="true"><path d="M0 0v11l7-5.500z" fill="#3b4f7c" /></svg>
        </button>
      </div>
      <div className="flex w-2 items-center border border-[#6b8fbc] bg-white pl-[2px]">
        <span className="h-[11px] w-px bg-[#5f84b6]" />
      </div>
      <div className="w-5 bg-[#7c9fd3]" />
    </div>
  );
}

/* ---------- status bar ---------- */

function ZoomKnob({ plus }: { plus?: boolean }) {
  return (
    <button type="button" aria-label={plus ? "Acercar" : "Alejar"} className="flex">
      <svg width="21" height="21" viewBox="0 0 21 21" aria-hidden="true">
        <circle cx="10.500" cy="10.500" r="9.500" fill="url(#knob)" stroke="#3f5f93" />
        <path d={plus ? "M5.500 10.500h10M10.500 5.500v10" : "M5.500 10.500h10"} stroke="#46587a" strokeWidth="2" />
      </svg>
    </button>
  );
}

const VIEWS = [
  { label: "Normal", d: "M1 1h14v12H1zM1 5h14M1 9h14M6 1v12M11 1v12", className: "bg-linear-to-b from-[#fbd9a6] via-[#f8b44c] to-[#ffe9a0]" },
  { label: "Diseño de página", d: "M1 1h14v13H1zM5 4h6v7H5zM6.500 6h3M6.500 8h3", className: "border-l border-[#8fb3e3]" },
  { label: "Vista previa de salto de página", d: "M1 1h14v13H1zM1 1h5v8H1zM7 1h4v8H7z", className: "border-l border-[#8fb3e3]" },
];

function StatusBar() {
  return (
    <footer className="flex h-[27px] shrink-0 items-stretch border-t border-[#567db1] bg-linear-to-b from-[#dceafd] from-30% via-[#b4d0f5] via-35% to-[#d6e5f9] text-[#15428b]">
      <div className="flex w-[72px] items-center border-r border-[#8fb3e3] pl-[7px] text-[#00156e]">Listo</div>
      <button type="button" aria-label="Grabar macro" className="flex w-[38px] items-start justify-center border-r border-l border-l-white border-r-[#8fb3e3] pt-1">
        <svg width="16" height="15" viewBox="0 0 16 15" aria-hidden="true">
          <path d="M1.500 2.500h13v11h-13z" fill="#fff" stroke="#46618f" />
          <path d="M2 3h12v3H2z" fill="#5f8bd0" />
          <path d="M3 8h10M3 10.500h10M6.500 7v6M10.500 7v6" stroke="#9db1d1" />
          <circle cx="3.500" cy="4" r="3" fill="#d8492c" />
        </svg>
      </button>
      <div className="flex-1" />
      <div className="flex w-[298px] items-center border-l-2 border-white bg-linear-to-b from-[#a9c7f2] via-[#83a8dc] to-[#6d93cd] pr-1 pl-[5px]">
        <div className="flex h-[23px] rounded-[2px] border border-[#5f8bc8] bg-linear-to-b from-[#dceafd] to-[#c0d8f8]">
          {VIEWS.map((v) => (
            <button key={v.label} type="button" aria-label={v.label} className={`flex w-[22px] items-center justify-center ${v.className}`}>
              <svg width="16" height="15" viewBox="0 0 16 15" aria-hidden="true"><path d={v.d} fill="#f2f2f2" stroke="#6b6f76" strokeWidth="1.500" /></svg>
            </button>
          ))}
        </div>
        <span className="mr-2 ml-[9px] text-[#00156e]">100%</span>
        <ZoomKnob />
        <div className="relative flex h-5 flex-1 items-center">
          <span className="h-px w-full bg-[#dbe7f8] shadow-[0_1px_0_#5f84b6]" />
          <input type="range" aria-label="Zoom" min="10" max="190" defaultValue="100" className="absolute inset-0 w-full opacity-0" />
          <svg width="12" height="17" viewBox="0 0 12 17" className="pointer-events-none absolute left-[45%]" aria-hidden="true">
            <path d="M1 1h10v10l-5 5-5-5z" fill="#e6f0fd" stroke="#3f5f93" strokeWidth="1.500" />
            <path d="M6 4v7" stroke="#7d9cc9" strokeWidth="2" />
          </svg>
        </div>
        <ZoomKnob plus />
      </div>
    </footer>
  );
}

/* ---------- taskbar ---------- */

function TaskButton({ label, running, active, children }: { label: string; running?: boolean; active?: boolean; children: ReactNode }) {
  return (
    <button
      type="button"
      aria-label={label}
      className={`relative flex h-12 w-12 items-center justify-center rounded-[4px] ${active ? "border border-[#e3e7ea] bg-white/75" : ""}`}
    >
      {children}
      {running ? <span className="absolute bottom-0 h-1 w-2 rounded-full bg-[#868a8e]" /> : null}
      {active ? <span className="absolute -bottom-px h-1 w-5 rounded-full bg-[#0a78d4]" /> : null}
    </button>
  );
}

function Taskbar() {
  return (
    <div className="grid h-[60px] shrink-0 grid-cols-[1fr_auto_1fr] items-center border-t border-[#b0b8c4] bg-[linear-gradient(to_right,#d4e9f4_0,#d8edf6_30%,#e6f3fa_50%,#eff1f3_62%,#f0f1f2_85%,#cfe6ec_100%)]">
      <button type="button" className="flex items-center gap-[8px] pl-6 text-left text-sm leading-5 text-[#1b1b1b]">
        <svg width="32" height="32" viewBox="0 0 32 32" aria-hidden="true">
          <path d="M13 2c6 3 8 12 1 16-6 2-11 0-13-3 7 1 13-4 12-13z" fill="#f2a32e" />
          <path d="M8 30a7 7 0 01-1-13c2-6 12-7 15-1 10-1 11 13 1 14z" fill="#a9c3f2" />
          <path d="M8 30a7 7 0 01-4-11c6-2 14 3 24 5-1 4-3 6-6 6z" fill="#86a7e6" />
        </svg>
        <span>
          14°C
          <span className="block text-[#5d6468]">Mayorm. nublado</span>
        </span>
      </button>

      <div className="flex items-center gap-[7px]">
        <TaskButton label="Inicio">
          <svg width="29" height="29" viewBox="0 0 29 29" aria-hidden="true">
            <path d="M0 1a1 1 0 011-1h13v14H0zM15 0h13a1 1 0 011 1v13H15zM0 15h14v14H1a1 1 0 01-1-1zM15 15h14v13a1 1 0 01-1 1H15z" fill="url(#win)" />
          </svg>
        </TaskButton>
        <label className="flex h-[39px] w-[274px] items-center rounded-full border border-[#cfd9df] bg-[#fafcfe] pr-[7px] pl-[14px]">
          <svg width="20" height="20" viewBox="0 0 20 20" fill="none" stroke="#222" strokeWidth="2" aria-hidden="true">
            <circle cx="8.500" cy="8.500" r="7" />
            <path d="M13.500 13.500l5 5" strokeWidth="2.500" />
          </svg>
          <input type="search" placeholder="Búsqueda" aria-label="Búsqueda" className="ml-[11px] min-w-0 flex-1 bg-transparent text-base outline-none placeholder:text-[#636363]" />
          <svg width="26" height="26" viewBox="0 0 26 26" aria-hidden="true">
            <path d="M1.500 24.500V13A11.500 11.500 0 1113 24.500z" fill="#fff" stroke="#2f7fe0" strokeWidth="1.500" />
            <path d="M1.500 14v10.500H13" fill="none" stroke="#1d3fb4" strokeWidth="1.500" />
            <path d="M8 5.500l3 1.200V16l4-2.200-2-1-1.200-3 6.200 2.200v4L11 20.500l-3-2z" fill="#2b83ec" />
          </svg>
        </label>
        <div className="flex gap-[7px]">
          <TaskButton label="Vista de tareas">
            <svg width="30" height="28" viewBox="0 0 30 28" aria-hidden="true">
              <path d="M0 7h22v21H0z" fill="#2d2d2d" />
              <path d="M8 0h21v19H8z" fill="#f8f8f8" />
              <path d="M8 7h14v12H8z" fill="#b8b8b8" />
            </svg>
          </TaskButton>
          <TaskButton label="Chat">
            <svg width="30" height="30" viewBox="0 0 30 30" aria-hidden="true">
              <path d="M15 1a14 14 0 11-7 26c-2 1-4 1-7 1l2-5A14 14 0 0115 1z" fill="#6463c8" />
              <path d="M7 9h12v12H7zM20 13l4-3v10l-4-3z" fill="#fff" />
            </svg>
          </TaskButton>
          <TaskButton label="Edge" running>
            <svg width="30" height="30" viewBox="0 0 30 30" aria-hidden="true">
              <circle cx="15" cy="15" r="15" fill="#1b84d8" />
              <path d="M1 10C4 3 9 0 15 0c9 0 15 7 15 13 0 5-4 7-8 7-3 0-4-1-4-2 3-4-1-10-8-10-4 0-7 1-9 2z" fill="#3fc9a6" />
              <path d="M22 2c5 3 8 7 8 11 0 5-4 7-8 7-3 0-4-1-4-2 4-5 7-9 4-16z" fill="#6ad84e" />
              <path d="M13 12c-5 5-2 14 6 17 5-1 8-4 10-8-6 4-15 2-16-4-.5-2 0-4 0-5z" fill="#114a94" />
              <path d="M14 12c3 0 5 3 4 6 1 3 6 3 11 1l1 4c-6 2-16 1-17-5-.5-3 0-5 1-6z" fill="#e9f0f4" />
            </svg>
          </TaskButton>
          <TaskButton label="Explorador de archivos">
            <svg width="30" height="28" viewBox="0 0 30 28" aria-hidden="true">
              <path d="M0 2q0-1 1-1h9l3 3h16q1 0 1 1v6H0z" fill="#dc9a0a" />
              <path d="M0 7h11l3-3h15q1 0 1 1v22H0z" fill="#fbc935" />
              <path d="M5 27v-5q0-2 2-2h16q2 0 2 2v5z" fill="#1279d6" />
              <path d="M8 23.500h14" stroke="#0a4f9c" />
            </svg>
          </TaskButton>
          <TaskButton label="Correo">
            <svg width="30" height="28" viewBox="0 0 30 28" aria-hidden="true">
              <path d="M0 9L15 0l15 9v6H0z" fill="#0c4d9e" />
              <path d="M2 9h26v10H2z" fill="#f4f6f8" />
              <path d="M0 9l15 9L30 9v19H0z" fill="#29a8ec" />
              <path d="M0 28l15-10 15 10z" fill="#1486d8" />
              <path d="M15 18L30 9v19z" fill="#42c4f5" />
            </svg>
          </TaskButton>
          <TaskButton label="Excel" active>
            <svg width="28" height="28" viewBox="0 0 28 28" aria-hidden="true">
              <path d="M1 25V6q0-5 5-5h19v24z" fill="#a5cf8f" stroke="#4f9345" strokeWidth="1.500" />
              <path d="M5 5h20l3 3-2 19L3 24z" fill="#f5f9f2" stroke="#b5c9ac" />
              <path d="M18 8h7v4h-7zM18 14h7v4h-7zM4 20h6v4H4zM11 20h6v4h-6zM18 20h6v5h-6z" fill="#5fa152" />
              <path d="M4 7h4l3 4 3-4h3l-4.500 5.500L17 18h-4l-3-4-3 4H4l4.500-5.500z" fill="#1f6a2a" />
            </svg>
          </TaskButton>
          <TaskButton label="Recortes" running>
            <svg width="28" height="28" viewBox="0 0 28 28" aria-hidden="true">
              <path d="M2 14V2h14" fill="none" stroke="#cf4a1c" strokeWidth="3" strokeDasharray="3 2" />
              <path d="M15 4v13M4 16h13" stroke="#8a9097" strokeWidth="3" fill="none" />
              <circle cx="24" cy="14.500" r="2.500" fill="#fff" stroke="#2496dc" strokeWidth="2" />
              <circle cx="13.500" cy="25" r="2.500" fill="#fff" stroke="#2496dc" strokeWidth="2" />
              <path d="M16 16l6-1M15 17l-1 6" stroke="#2496dc" strokeWidth="2" />
            </svg>
          </TaskButton>
        </div>
      </div>

      <div className="flex items-center justify-end gap-[10px] pr-6 text-sm leading-5 text-[#1b1b1b]">
        <button type="button" aria-label="Mostrar iconos ocultos" className="mr-[12px]">
          <svg width="14" height="8" viewBox="0 0 14 8" aria-hidden="true"><path d="M1 7.500l6-6 6 6" fill="none" stroke="#222" strokeWidth="1.500" /></svg>
        </button>
        <svg width="20" height="16" viewBox="0 0 20 16" fill="none" stroke="#222" strokeWidth="1.500" aria-hidden="true">
          <path d="M.500 6a13.500 13.500 0 0119 0M3.500 9a9 9 0 0113 0M6.500 11.800a5 5 0 017 0" />
          <circle cx="10" cy="14" r="1.200" fill="#222" />
        </svg>
        <svg width="20" height="16" viewBox="0 0 20 16" fill="none" stroke="#222" strokeWidth="1.300" aria-hidden="true">
          <path d="M1 5.500h3.500L9 1.500v13l-4.500-4H1z" />
          <path d="M11.500 5.500q2 2.500 0 5M14 3.500q3.500 4.500 0 9" />
          <path d="M16.500 1.500q5 6.500 0 13" stroke="#b5c0c4" />
        </svg>
        <svg width="20" height="14" viewBox="0 0 20 14" aria-hidden="true">
          <rect x="1" y="1.500" width="16" height="11" rx="3" fill="none" stroke="#222" strokeWidth="1.500" />
          <rect x="3" y="3.500" width="10" height="7" rx="1" fill="#111" />
          <path d="M18 5h2v4h-2z" fill="#222" />
        </svg>
        <div className="ml-[14px] text-right">
          <div>23:41</div>
          <div>23/09/2023</div>
        </div>
      </div>
    </div>
  );
}

export default function App() {
  return (
    <div className="relative flex h-screen flex-col overflow-hidden bg-[#bfdbff] font-['Open_Sans','Noto_Sans',sans-serif] text-[13px] leading-4">
      <Defs />
      <OfficeButton />
      <TitleBar />
      <TabBar />
      <Ribbon />
      <FormulaBar />
      <div className="flex min-h-0 flex-1 border-t border-[#6b8fbc]">
        <Worksheet />
        <VerticalScroll />
      </div>
      <SheetBar />
      <StatusBar />
      <Taskbar />
    </div>
  );
}
